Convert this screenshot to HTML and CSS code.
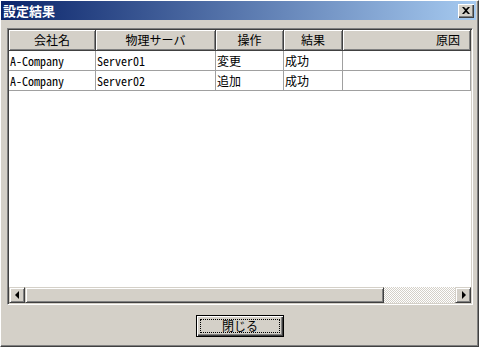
FILE: index.html
```html
<!DOCTYPE html>
<html lang="ja">
<head>
<meta charset="utf-8">
<title>設定結果</title>
<link rel="stylesheet" href="styles.css">
</head>
<body>
<div class="window">
  <div class="titlebar">
    <span class="title">設定結果</span>
    <span class="close">
      <svg width="8" height="7" viewBox="0 0 8 7"><path d="M0 0h2l2 2 2-2h2L5 3.5 8 7H6L4 5 2 7H0l3-3.5z" fill="#000"/></svg>
    </span>
  </div>
  <div class="client">
    <div class="listview">
      <div class="lv-area">
        <div class="lv-header">
          <div class="hcell">会社名</div>
          <div class="hcell">物理サーバ</div>
          <div class="hcell">操作</div>
          <div class="hcell">結果</div>
          <div class="hcell right">原因</div>
        </div>
        <div class="lv-row">
          <div class="cell">A-Company</div>
          <div class="cell">Server01</div>
          <div class="cell">変更</div>
          <div class="cell">成功</div>
          <div class="cell"></div>
        </div>
        <div class="lv-row">
          <div class="cell">A-Company</div>
          <div class="cell">Server02</div>
          <div class="cell">追加</div>
          <div class="cell">成功</div>
          <div class="cell"></div>
        </div>
      </div>
      <div class="hscroll">
        <span class="sb-btn"><span class="arrow-left"></span></span>
        <span class="thumb"></span>
        <span class="track"></span>
        <span class="sb-btn"><span class="arrow-right"></span></span>
      </div>
    </div>
    <div class="footer">
      <span class="btn-default"><span class="focus">閉じる</span></span>
    </div>
  </div>
</div>
</body>
</html>
```

FILE: styles.css
```css
html, body {
  margin: 0;
  padding: 0;
}
body {
  background: #d4d0c8;
  font-family: "Noto Sans Mono CJK JP", "Noto Sans CJK JP", sans-serif;
  font-size: 12px;
  color: #000;
}
.window {
  width: 479px;
  height: 347px;
  box-sizing: border-box;
  border: 1px solid;
  border-color: #ffffff #404040 #404040 #ffffff;
  box-shadow: inset -1px -1px #808080;
  padding: 0 2px 2px 0;
  background: #d4d0c8;
  display: flex;
  flex-direction: column;
}
.titlebar {
  height: 19px;
  flex: none;
  background: linear-gradient(to right, #0a246a, #a6caf0);
  display: flex;
  align-items: center;
  justify-content: space-between;
  padding: 0 2px 0 2px;
}
.title {
  color: #fff;
  font-weight: bold;
  font-size: 13px;
  line-height: 19px;
}
.close {
  width: 16px;
  height: 14px;
  box-sizing: border-box;
  background: #d4d0c8;
  box-shadow: inset 1px 1px #ffffff, inset -1px -1px #404040, inset -2px -2px #808080;
  display: flex;
  align-items: center;
  justify-content: center;
}
.close svg {
  display: block;
  margin: 0 1px 1px 0;
}
.client {
  flex: 1;
  display: flex;
  flex-direction: column;
  padding: 8px 3px 0 6px;
}
.listview {
  height: 277px;
  box-sizing: border-box;
  border: 1px solid;
  border-color: #808080 #ffffff #ffffff #808080;
  box-shadow: inset 1px 1px #404040, inset -1px -1px #d4d0c8;
  padding: 1px;
  background: #fff;
  display: flex;
  flex-direction: column;
}
.lv-area {
  flex: 1;
  overflow: hidden;
}
.lv-header, .lv-row {
  display: grid;
  grid-template-columns: 87px 120px 68px 59px 128px;
}
.hcell {
  height: 21px;
  box-sizing: border-box;
  background: #d4d0c8;
  border-right: 1px solid #404040;
  border-bottom: 1px solid #404040;
  box-shadow: inset 1px 1px #ffffff, inset -1px -1px #808080;
  text-align: center;
  line-height: 20px;
  white-space: nowrap;
  overflow: hidden;
}
.hcell.right {
  text-align: right;
  padding-right: 10px;
}
.cell {
  height: 20px;
  box-sizing: border-box;
  border-right: 1px solid #a0a0a0;
  border-bottom: 1px solid #a0a0a0;
  line-height: 19px;
  padding-left: 1px;
  white-space: nowrap;
  overflow: hidden;
}
.hscroll {
  height: 16px;
  flex: none;
  display: flex;
}
.sb-btn {
  width: 16px;
  height: 16px;
  flex: none;
  box-sizing: border-box;
  background: #d4d0c8;
  border: 1px solid;
  border-color: #d4d0c8 #404040 #404040 #d4d0c8;
  box-shadow: inset 1px 1px #ffffff, inset -1px -1px #808080;
  display: flex;
  align-items: center;
  justify-content: center;
}
.arrow-left {
  width: 0;
  height: 0;
  border-top: 4px solid transparent;
  border-bottom: 4px solid transparent;
  border-right: 4px solid #000;
  margin-right: 1px;
}
.arrow-right {
  width: 0;
  height: 0;
  border-top: 4px solid transparent;
  border-bottom: 4px solid transparent;
  border-left: 4px solid #000;
  margin-left: 1px;
}
.thumb {
  width: 359px;
  flex: none;
  box-sizing: border-box;
  background: #d4d0c8;
  border: 1px solid;
  border-color: #d4d0c8 #404040 #404040 #d4d0c8;
  box-shadow: inset 1px 1px #ffffff, inset -1px -1px #808080;
}
.track {
  flex: 1;
  background: repeating-conic-gradient(#d4d0c8 0 25%, #ffffff 0 50%) 0 0 / 2px 2px;
}
.footer {
  display: flex;
  justify-content: center;
  padding-top: 10px;
}
.btn-default {
  width: 88px;
  height: 22px;
  box-sizing: border-box;
  border: 1px solid #000;
  background: #d4d0c8;
  box-shadow: inset 1px 1px #ffffff, inset -1px -1px #404040, inset -2px -2px #808080;
  padding: 3px;
  display: flex;
}
.focus {
  flex: 1;
  border: 1px dotted #000;
  text-align: center;
  line-height: 12px;
  font-size: 12px;
}
```
